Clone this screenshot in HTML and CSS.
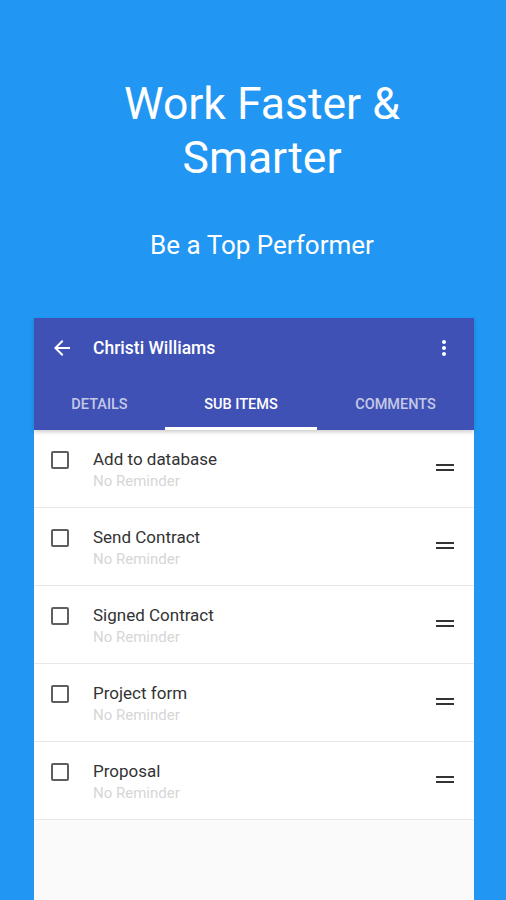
FILE: index.html
```html
<!DOCTYPE html>
<html lang="en">
<head>
    <meta charset="UTF-8">
    <meta name="viewport" content="width=device-width, initial-scale=1.0">
    <title>Work Faster &amp; Smarter</title>
    <link rel="stylesheet" href="styles.css">
</head>
<body>
    <header class="promo">
        <h1>Work Faster &amp;<br>Smarter</h1>
        <p class="tagline">Be a Top Performer</p>
    </header>

    <div class="phone">
        <div class="appbar">
            <div class="toolbar">
                <svg class="icon" width="24" height="24" viewBox="0 0 24 24">
                    <path d="M20 11H7.83l5.59-5.59L12 4l-8 8 8 8 1.41-1.41L7.83 13H20v-2z" fill="#fff"/>
                </svg>
                <span class="title">Christi Williams</span>
                <svg class="icon more" width="24" height="24" viewBox="0 0 24 24">
                    <path d="M12 8c1.1 0 2-.9 2-2s-.9-2-2-2-2 .9-2 2 .9 2 2 2zm0 2c-1.1 0-2 .9-2 2s.9 2 2 2 2-.9 2-2-.9-2-2-2zm0 6c-1.1 0-2 .9-2 2s.9 2 2 2 2-.9 2-2-.9-2-2-2z" fill="#fff"/>
                </svg>
            </div>
            <nav class="tabs">
                <div class="tab tab-details">Details</div>
                <div class="tab tab-sub active">Sub Items</div>
                <div class="tab tab-comments">Comments</div>
            </nav>
        </div>

        <ul class="items">
            <li class="item">
                <span class="checkbox"></span>
                <div class="text">
                    <div class="name">Add to database</div>
                    <div class="reminder">No Reminder</div>
                </div>
                <span class="handle"></span>
            </li>
            <li class="item">
                <span class="checkbox"></span>
                <div class="text">
                    <div class="name">Send Contract</div>
                    <div class="reminder">No Reminder</div>
                </div>
                <span class="handle"></span>
            </li>
            <li class="item">
                <span class="checkbox"></span>
                <div class="text">
                    <div class="name">Signed Contract</div>
                    <div class="reminder">No Reminder</div>
                </div>
                <span class="handle"></span>
            </li>
            <li class="item">
                <span class="checkbox"></span>
                <div class="text">
                    <div class="name">Project form</div>
                    <div class="reminder">No Reminder</div>
                </div>
                <span class="handle"></span>
            </li>
            <li class="item">
                <span class="checkbox"></span>
                <div class="text">
                    <div class="name">Proposal</div>
                    <div class="reminder">No Reminder</div>
                </div>
                <span class="handle"></span>
            </li>
        </ul>
    </div>
</body>
</html>
```

FILE: styles.css
```css
html, body {
    height: 100%;
}

body {
    font-family: Roboto, "Noto Sans", sans-serif;
    background-color: #2196f3;
    margin: 0;
    overflow: hidden;
    display: flex;
    flex-direction: column;
}

.promo {
    text-align: center;
    color: #fff;
    padding: 77px 0 0 18px;
}

.promo h1 {
    font-size: 44.5px;
    font-weight: 400;
    line-height: 54px;
    margin: 0;
}

.tagline {
    font-size: 26px;
    margin: 45px 0 0;
}

.phone {
    margin: 58px 0 0 34px;
    width: 440px;
    flex: 1;
    background-color: #fafafa;
    display: flex;
    flex-direction: column;
}

.appbar {
    background-color: #3f51b5;
    color: #fff;
    box-shadow: 0 2px 4px rgba(0, 0, 0, 0.2);
    position: relative;
}

.toolbar {
    height: 60px;
    display: flex;
    align-items: center;
    padding: 0 18px 0 16px;
}

.toolbar .title {
    font-size: 17.5px;
    font-weight: 500;
    margin-left: 19px;
    flex: 1;
}

.tabs {
    display: flex;
    height: 52px;
}

.tab {
    display: flex;
    align-items: center;
    justify-content: center;
    font-size: 14.5px;
    font-weight: 500;
    text-transform: uppercase;
    color: rgba(255, 255, 255, 0.7);
    padding-top: 3px;
    border-bottom: 3px solid transparent;
    box-sizing: border-box;
}

.tab-details {
    width: 131px;
}

.tab-sub {
    width: 152px;
}

.tab-comments {
    flex: 1;
}

.tab.active {
    color: #fff;
    border-bottom-color: #fff;
}

.items {
    list-style: none;
    margin: 0;
    padding: 0;
}

.item {
    height: 78px;
    box-sizing: border-box;
    background-color: #fff;
    border-bottom: 1px solid #e8e8e8;
    display: flex;
    align-items: flex-start;
    padding: 20px 20px 0 17px;
}

.checkbox {
    width: 14px;
    height: 14px;
    border: 2px solid #5f5f5f;
    border-radius: 2px;
    margin-top: 1px;
}

.text {
    flex: 1;
    margin-left: 24px;
}

.name {
    font-size: 17px;
    color: #333;
    line-height: 19px;
}

.reminder {
    font-size: 15px;
    color: #d6d6d6;
    line-height: 24px;
}

.handle {
    width: 18px;
    height: 3px;
    border-top: 2px solid #333;
    border-bottom: 2px solid #333;
    margin-top: 14px;
}
```
